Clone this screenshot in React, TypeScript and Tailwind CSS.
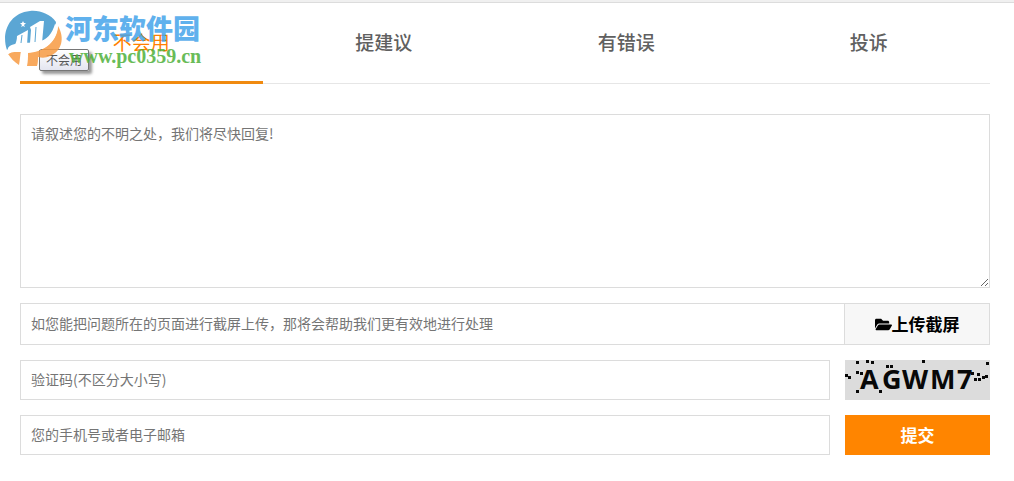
import { useState } from "react";
import { clsx } from "clsx";
import { FaFolderOpen } from "react-icons/fa";

const TABS = ["不会用", "提建议", "有错误", "投诉"];

const fieldClass =
    "h-10 w-full min-w-0 border border-[#dcdcdc] bg-white px-2.5 pb-0.5 text-sm text-[#333] outline-none placeholder:text-[#757575]";

const SiteLogo = () => (
    <svg width="65" height="72" viewBox="0 0 65 72" aria-hidden="true">
        <path
            fill="#3f97cd"
            d="M7 50 C1 33 9 13 30 11 C40 10 50 14 56 22 C55 32 50 38 42 41 C32 44 15 42 7 50 Z"
        />
        <path
            fill="#f79b43"
            d="M58 26 C65 38 62 51 50 56 C46 58 42 58 38 57 C38 60 38 63 37 66 H27 C28 61 28 57 28 53 C42 52 56 44 58 26 Z"
        />
        <path fill="#f79b43" d="M8 54 C13 50 17 50 21 51 C20 55 20 60 19 65 C14 62 11 58 8 54 Z" />
        <path
            fill="#fff"
            d="M17 36 L28 30 L27 45 H15 C16 42 17 40 17 36 Z M30 27 L40 21 H44 L42 43 H30 L31 30 Z"
        />
        <path stroke="#3f97cd" strokeWidth="1" fill="none" d="M22 35 L21 43 M36 27 L35 42" />
        <path
            fill="#fff"
            d="M8 48 C13 41 27 44 38 42 C47 40 52 34 55 24 L58 26 C57 42 45 50 31 52 C21 53 12 50 7 55 Z"
        />
        <path fill="#fff" d="M23 21 l1 2 h2 l-2 2 1 2 -2 -1 -2 1 1 -2 -2 -2 h2 Z" />
    </svg>
);

const Watermark = () => (
    <div className="pointer-events-none absolute top-0 left-0 flex opacity-85">
        <SiteLogo />
        <div className="flex flex-col pt-3">
            <span className="text-[27px] leading-8 font-black whitespace-nowrap text-[#45a4ea]">
                河东软件园
            </span>
            <span className="pl-1 font-['Liberation_Serif',serif] text-xl leading-6 font-bold text-[#4fb13b]">
                www.pc0359.cn
            </span>
        </div>
    </div>
);

const CAPTCHA_DOTS = [
    [0, 14], [3, 16], [11, 1], [21, 0], [26, 1], [11, 11], [15, 12],
    [11, 30], [34, 30], [41, 5], [45, 5], [77, 0], [126, 12], [129, 18],
    [132, 13], [133, 18], [137, 16], [140, 15], [141, 2],
];

const Captcha = () => (
    <svg className="h-10 w-full bg-[#dcdcdc]" viewBox="0 0 145 40" aria-label="验证码">
        <text
            x="15 37 57 85 112"
            y="29"
            fontFamily="'Open Sans', sans-serif"
            fontSize="27"
            fontWeight="700"
            fill="#080808"
        >
            AGWM7
        </text>
        {CAPTCHA_DOTS.map(([x, y]) => (
            <rect key={`${x}-${y}`} x={x} y={y} width="3" height="3" fill="#080808" />
        ))}
    </svg>
);

export default function App() {
    const [activeTab, setActiveTab] = useState(TABS[0]);

    return (
        <div className="relative min-h-screen bg-white font-['Noto_Sans_CJK_SC',sans-serif]">
            <div className="h-[3px] border-b border-[#dcdcdc] bg-[#f0f0f0]" />

            <main className="pr-6 pb-6 pl-5">
                <div role="tablist" className="grid grid-cols-4 border-b border-[#e6e6e6]">
                    {TABS.map((tab) => (
                        <button
                            key={tab}
                            type="button"
                            role="tab"
                            aria-selected={tab === activeTab}
                            onClick={() => setActiveTab(tab)}
                            className={clsx(
                                "-mb-px h-[81px] border-b-3 text-[19px]",
                                tab === activeTab
                                    ? "border-[#f08a10] text-[#ff7f00]"
                                    : "border-transparent font-medium text-[#606060]",
                            )}
                        >
                            {tab}
                        </button>
                    ))}
                </div>

                <form
                    className="mt-[30px] flex flex-col gap-[15px]"
                    onSubmit={(event) => event.preventDefault()}
                >
                    <textarea
                        aria-label="问题描述"
                        className="block h-[174px] w-full border border-[#dcdcdc] px-2.5 py-2 text-sm text-[#333] outline-none placeholder:text-[#757575]"
                        placeholder="请叙述您的不明之处，我们将尽快回复!"
                    />

                    <div className="flex h-[42px] border border-[#dcdcdc]">
                        <input
                            type="text"
                            readOnly
                            aria-label="截屏文件"
                            className="min-w-0 flex-1 px-2.5 pb-0.5 text-sm outline-none placeholder:text-[#757575]"
                            placeholder="如您能把问题所在的页面进行截屏上传，那将会帮助我们更有效地进行处理"
                        />
                        <button
                            type="button"
                            className="flex w-[145px] items-center justify-center border-l border-[#dcdcdc] bg-[#f7f7f7] text-[17px] font-bold text-black"
                        >
                            <FaFolderOpen aria-hidden="true" />
                            上传截屏
                        </button>
                    </div>

                    <div className="grid grid-cols-[1fr_145px] gap-[15px]">
                        <input
                            type="text"
                            aria-label="验证码"
                            className={fieldClass}
                            placeholder="验证码(不区分大小写)"
                        />
                        <Captcha />
                        <input
                            type="text"
                            aria-label="联系方式"
                            className={fieldClass}
                            placeholder="您的手机号或者电子邮箱"
                        />
                        <button
                            type="submit"
                            className="h-10 bg-[#ff8500] text-[17px] font-bold text-white"
                        >
                            提交
                        </button>
                    </div>
                </form>
            </main>

            <div
                role="tooltip"
                className="pointer-events-none absolute top-[49px] left-[39px] rounded-xs border border-[#767676] bg-linear-to-b from-white to-[#e4e5f0] px-1.5 text-xs leading-5 text-[#575757] shadow-[3px_3px_3px_rgba(0,0,0,0.4)]"
            >
                不会用
            </div>
            <Watermark />
        </div>
    );
}
